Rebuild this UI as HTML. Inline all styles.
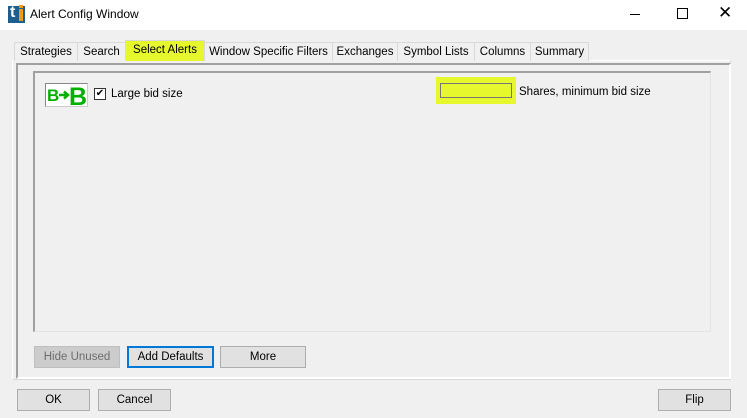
<!DOCTYPE html><html><head><style>
body{margin:0;width:747px;height:418px;background:#f0f0f0;font-family:"Liberation Sans",sans-serif;font-size:11.5px;position:relative;overflow:hidden;color:#000}
.a{position:absolute}
.tab{position:absolute;top:42px;height:18px;border:1px solid #d9d9d9;border-bottom:none;background:#f0f0f0;line-height:18px;text-align:center;font-size:11.5px;white-space:nowrap}
.btn{position:absolute;height:20px;border:1px solid #adadad;background:#e1e1e1;text-align:center;line-height:20px;font-size:11.5px}
</style></head><body>
<div class="a" style="left:0;top:0;width:747px;height:30px;background:#fff"></div>
<div class="a" style="left:8px;top:6px;width:17px;height:17px;background:#1c5f8f"></div>
<div class="a" style="left:10px;top:4px;color:#fff;font-weight:bold;font-size:16px">t</div>
<div class="a" style="left:19px;top:9px;width:4px;height:12px;background:#f39a1c"></div>
<div class="a" style="left:19px;top:5px;width:4px;height:3px;background:#f39a1c"></div>
<div class="a" style="left:30px;top:7px;font-size:12px">Alert Config Window</div>
<div class="a" style="left:630px;top:14px;width:10px;height:1px;background:#000"></div>
<div class="a" style="left:677px;top:8px;width:9px;height:9px;border:1px solid #000"></div>
<div class="a" style="left:718px;top:3px;font-size:17px">✕</div>

<div class="a" style="left:12px;top:60px;width:717px;height:318px;border:1px solid #fff;border-right-color:#d9d9d9;border-bottom-color:#d9d9d9"></div>
<div class="a" style="left:16px;top:63px;border-top:2px solid #a0a0a0;border-left:2px solid #a0a0a0;border-right:2px solid #fff;border-bottom:2px solid #fff;box-sizing:border-box;width:715px;height:316px"></div>
<div class="a" style="left:33px;top:71px;width:678px;height:261px;border-top:2px solid #a0a0a0;border-left:2px solid #a0a0a0;border-right:1px solid #e3e3e3;border-bottom:1px solid #e3e3e3;box-sizing:border-box"></div>

<div class="tab" style="left:14px;width:62px">Strategies</div>
<div class="tab" style="left:77px;width:47px">Search</div>
<div class="tab" style="left:125px;top:40px;height:20px;width:78px;background:#e6f72d;line-height:19px">Select Alerts</div>
<div class="tab" style="left:204px;width:127px">Window Specific Filters</div>
<div class="tab" style="left:332px;width:64px">Exchanges</div>
<div class="tab" style="left:397px;width:76px">Symbol Lists</div>
<div class="tab" style="left:474px;width:55px">Columns</div>
<div class="tab" style="left:530px;width:57px">Summary</div>

<div class="a" style="left:45px;top:83px;width:41px;height:22px;background:#fff;border-top:1px solid #888;border-left:1px solid #888;border-right:1px solid #ccc;border-bottom:1px solid #ccc"></div>
<svg class="a" style="left:46px;top:84px" width="41" height="22" viewBox="0 0 41 22">
<text x="1" y="17" font-family="Liberation Sans" font-weight="bold" font-size="17" fill="#00b000">B</text>
<path d="M13 11h8M18 7.5l4 3.5-4 3.5" stroke="#00b000" stroke-width="2.5" fill="none"/>
<text x="23" y="21" font-family="Liberation Sans" font-weight="bold" font-size="25" fill="#00b000">B</text>
</svg>
<div class="a" style="left:94px;top:88px;width:10px;height:10px;border:1px solid #333;background:#fff;font-size:10px;line-height:10px;text-align:center">✔</div>
<div class="a" style="left:111px;top:88px">Large bid size</div>

<div class="a" style="left:436px;top:77px;width:80px;height:27px;background:#e6f72d"></div>
<div class="a" style="left:440px;top:83px;width:72px;height:15px;border:1px solid #777;box-sizing:border-box"></div>
<div class="a" style="left:519px;top:86px">Shares, minimum bid size</div>

<div class="btn" style="left:34px;top:346px;width:84px;color:#6d6d6d;background:#cccccc;border-color:#bfbfbf">Hide Unused</div>
<div class="btn" style="left:127px;top:346px;width:83px;border:2px solid #0078d7;height:18px;line-height:18px">Add Defaults</div>
<div class="btn" style="left:220px;top:346px;width:84px">More</div>
<div class="btn" style="left:17px;top:389px;width:71px">OK</div>
<div class="btn" style="left:98px;top:389px;width:71px">Cancel</div>
<div class="btn" style="left:658px;top:389px;width:71px">Flip</div>
</body></html>
